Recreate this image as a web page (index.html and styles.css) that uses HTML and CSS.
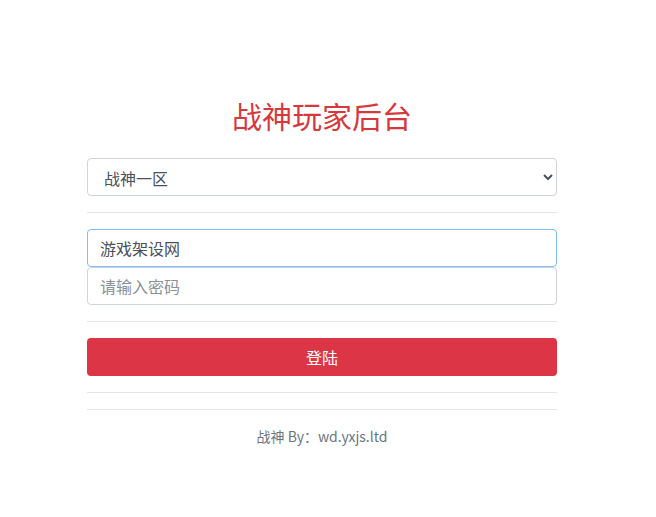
FILE: index.html
```html
<!DOCTYPE html>
<html lang="zh-CN">
<head>
  <meta charset="UTF-8">
  <meta name="viewport" content="width=device-width, initial-scale=1.0">
  <title>战神玩家后台</title>
  <link rel="stylesheet" href="styles.css">
</head>
<body>

<div class="login-box">
  <h2 class="title">战神玩家后台</h2>

  <select class="form-control server-select">
    <option value="1">战神一区</option>
  </select>

  <hr>

  <input type="text" class="form-control focused" value="游戏架设网" autofocus>
  <input type="password" class="form-control" placeholder="请输入密码">

  <hr>

  <button class="btn-login">登陆</button>

  <hr>
  <hr>

  <p class="footer">战神 By：wd.yxjs.ltd</p>
</div>

<script>
  const user = document.querySelector('.focused');
  user.focus();
  user.setSelectionRange(user.value.length, user.value.length);
</script>

</body>
</html>
```

FILE: styles.css
```css
body {
  font-family: "Noto Sans CJK SC", "Liberation Sans", sans-serif;
  margin: 0;
  padding: 0 12px 0 0;
  background-color: #fff;
  color: #212529;
  font-size: 16px;
}

.login-box {
  width: 470px;
  margin: 0 auto;
  padding-top: 97px;
}

.title {
  margin: 0 0 25px;
  font-size: 30px;
  font-weight: 400;
  line-height: 36px;
  text-align: center;
  color: #d5383d;
}

.form-control {
  display: block;
  box-sizing: border-box;
  width: 100%;
  height: 38px;
  padding: 6px 12px;
  font-family: inherit;
  font-size: 16px;
  color: #495057;
  background-color: #fff;
  border: 1px solid #ced4da;
  border-radius: 4px;
  outline: none;
  caret-color: #212529;
}

.form-control::placeholder {
  color: #8a9097;
}

.focused {
  border-color: #80bdff;
}

hr {
  margin: 16px 0;
  border: 0;
  border-top: 1px solid rgba(0, 0, 0, 0.1);
}

.btn-login {
  display: block;
  height: 38px;
  width: 100%;
  border: none;
  border-radius: 4px;
  background-color: #dc3545;
  color: #fff;
  font-family: inherit;
  font-size: 16px;
  cursor: pointer;
}

.footer {
  margin: 0;
  text-align: center;
  font-size: 14px;
  line-height: 21px;
  color: #6c757d;
}
```
